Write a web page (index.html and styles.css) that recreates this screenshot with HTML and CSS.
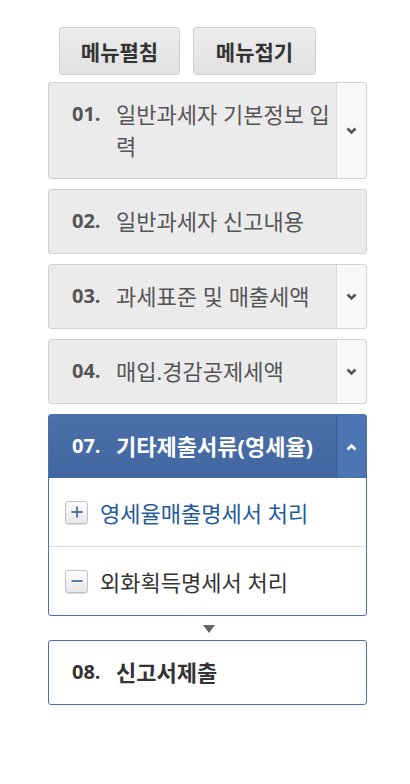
FILE: index.html
```html
<!DOCTYPE html>
<html lang="ko">
<head>
    <meta charset="UTF-8">
    <meta name="viewport" content="width=device-width, initial-scale=1.0">
    <title>신고서 작성</title>
    <link rel="stylesheet" href="styles.css">
</head>
<body>
<div class="sidebar">
    <!-- 메뉴 버튼 -->
    <div class="menu-buttons">
        <button class="btn-open">메뉴펼침</button>
        <button class="btn-close">메뉴접기</button>
    </div>

    <!-- 단계 목록 -->
    <ul class="steps">
        <li class="step">
            <div class="step-title"><span class="num">01.</span><span class="label">일반과세자 기본정보 입력</span></div>
            <span class="toggle">
                <svg width="11" height="8" viewBox="0 0 11 8"><path d="M1.5 1.5 L5.5 5.5 L9.5 1.5" fill="none" stroke="#555" stroke-width="2.6"/></svg>
            </span>
        </li>
        <li class="step">
            <div class="step-title"><span class="num">02.</span><span class="label">일반과세자 신고내용</span></div>
        </li>
        <li class="step">
            <div class="step-title"><span class="num">03.</span><span class="label">과세표준 및 매출세액</span></div>
            <span class="toggle">
                <svg width="11" height="8" viewBox="0 0 11 8"><path d="M1.5 1.5 L5.5 5.5 L9.5 1.5" fill="none" stroke="#555" stroke-width="2.6"/></svg>
            </span>
        </li>
        <li class="step">
            <div class="step-title"><span class="num">04.</span><span class="label">매입.경감공제세액</span></div>
            <span class="toggle">
                <svg width="11" height="8" viewBox="0 0 11 8"><path d="M1.5 1.5 L5.5 5.5 L9.5 1.5" fill="none" stroke="#555" stroke-width="2.6"/></svg>
            </span>
        </li>
        <li class="step open">
            <div class="step-head">
                <div class="step-title"><span class="num">07.</span><span class="label">기타제출서류(영세율)</span></div>
                <span class="toggle">
                    <svg width="11" height="8" viewBox="0 0 11 8"><path d="M1.5 6.5 L5.5 2.5 L9.5 6.5" fill="none" stroke="#fff" stroke-width="2.6"/></svg>
                </span>
            </div>
            <ul class="sub">
                <li class="sub-item current">
                    <span class="box">
                        <svg width="14" height="14" viewBox="0 0 14 14"><path d="M7 1.5 V12.5 M1.5 7 H12.5" stroke="#4f6f9f" stroke-width="1.8"/></svg>
                    </span>
                    영세율매출명세서 처리
                </li>
                <li class="sub-item">
                    <span class="box">
                        <svg width="14" height="14" viewBox="0 0 14 14"><path d="M1.5 7 H12.5" stroke="#4f6f9f" stroke-width="1.8"/></svg>
                    </span>
                    외화획득명세서 처리
                </li>
            </ul>
        </li>
    </ul>

    <div class="arrow-down"></div>

    <div class="step final">
        <div class="step-title"><span class="num">08.</span><span class="label">신고서제출</span></div>
    </div>
</div>
</body>
</html>
```

FILE: styles.css
```css
/* 기본 */
body {
    margin: 0;
    padding: 0;
    background: #fff;
    font-family: "Open Sans", "Noto Sans CJK KR", sans-serif;
    color: #555;
}

.sidebar {
    width: 319px;
    margin-left: 48px;
    padding-top: 27px;
}

/* 메뉴 버튼 */
.menu-buttons {
    display: flex;
    gap: 13px;
    margin-left: 11px;
    margin-bottom: 7px;
}

.menu-buttons button {
    height: 48px;
    padding: 0;
    font-family: inherit;
    font-size: 21px;
    font-weight: bold;
    color: #333;
    background: linear-gradient(#ececec, #e2e2e2);
    border: 1px solid #d0d0d0;
    border-radius: 3px;
}

.btn-open {
    width: 121px;
}

.btn-close {
    width: 123px;
}

/* 단계 목록 */
.steps {
    list-style: none;
    margin: 0;
    padding: 0;
}

.step {
    display: flex;
    margin-bottom: 10px;
    background: #ebebeb;
    border: 1px solid #d2d2d2;
    border-radius: 3px;
}

.step-title {
    flex: 1;
    display: flex;
    align-items: flex-start;
    padding: 15px 0 16px 23px;
    line-height: 32px;
}

.num {
    flex: none;
    width: 44px;
    font-size: 20px;
    font-weight: bold;
    color: #555;
}

.label {
    font-size: 22px;
}

.toggle {
    flex: none;
    width: 29px;
    display: flex;
    align-items: center;
    justify-content: center;
    background: #f8f8f8;
    border-left: 1px solid #dcdcdc;
    border-radius: 0 3px 3px 0;
}

/* 열린 단계 */
.step.open {
    display: block;
    margin-bottom: 0;
    background: #fff;
    border-color: #4a71ae;
}

.step-head {
    display: flex;
    background: linear-gradient(#4b6fa9, #4266a0);
}

.step-head .num,
.step-head .label {
    color: #fff;
    font-weight: bold;
}

.step-head .toggle {
    background: #4c75b3;
    border-left: 1px solid #3b5d95;
    border-radius: 0 2px 0 0;
}

.sub {
    list-style: none;
    margin: 0;
    padding: 0;
}

.sub-item {
    display: flex;
    align-items: center;
    height: 68px;
    padding-left: 16px;
    font-size: 22px;
    color: #333;
}

.sub-item + .sub-item {
    border-top: 1px solid #dcdcdc;
}

.sub-item.current {
    color: #235a9b;
}

.box {
    flex: none;
    width: 21px;
    height: 21px;
    margin-right: 12px;
    display: flex;
    align-items: center;
    justify-content: center;
    background: linear-gradient(#fdfdfd, #e6e6e6);
    border: 1px solid #c2c2c2;
    border-radius: 3px;
    box-shadow: 0 1px 1px rgba(0, 0, 0, 0.15);
}

/* 다음 단계 화살표 */
.arrow-down {
    width: 0;
    height: 0;
    margin: 9px auto 7px;
    border-left: 6px solid transparent;
    border-right: 6px solid transparent;
    border-top: 8px solid #666;
    position: relative;
    left: 1px;
}

.step.final {
    background: #fff;
    border-color: #4a71ae;
}

.step.final .num,
.step.final .label {
    color: #333;
    font-weight: bold;
}
```
